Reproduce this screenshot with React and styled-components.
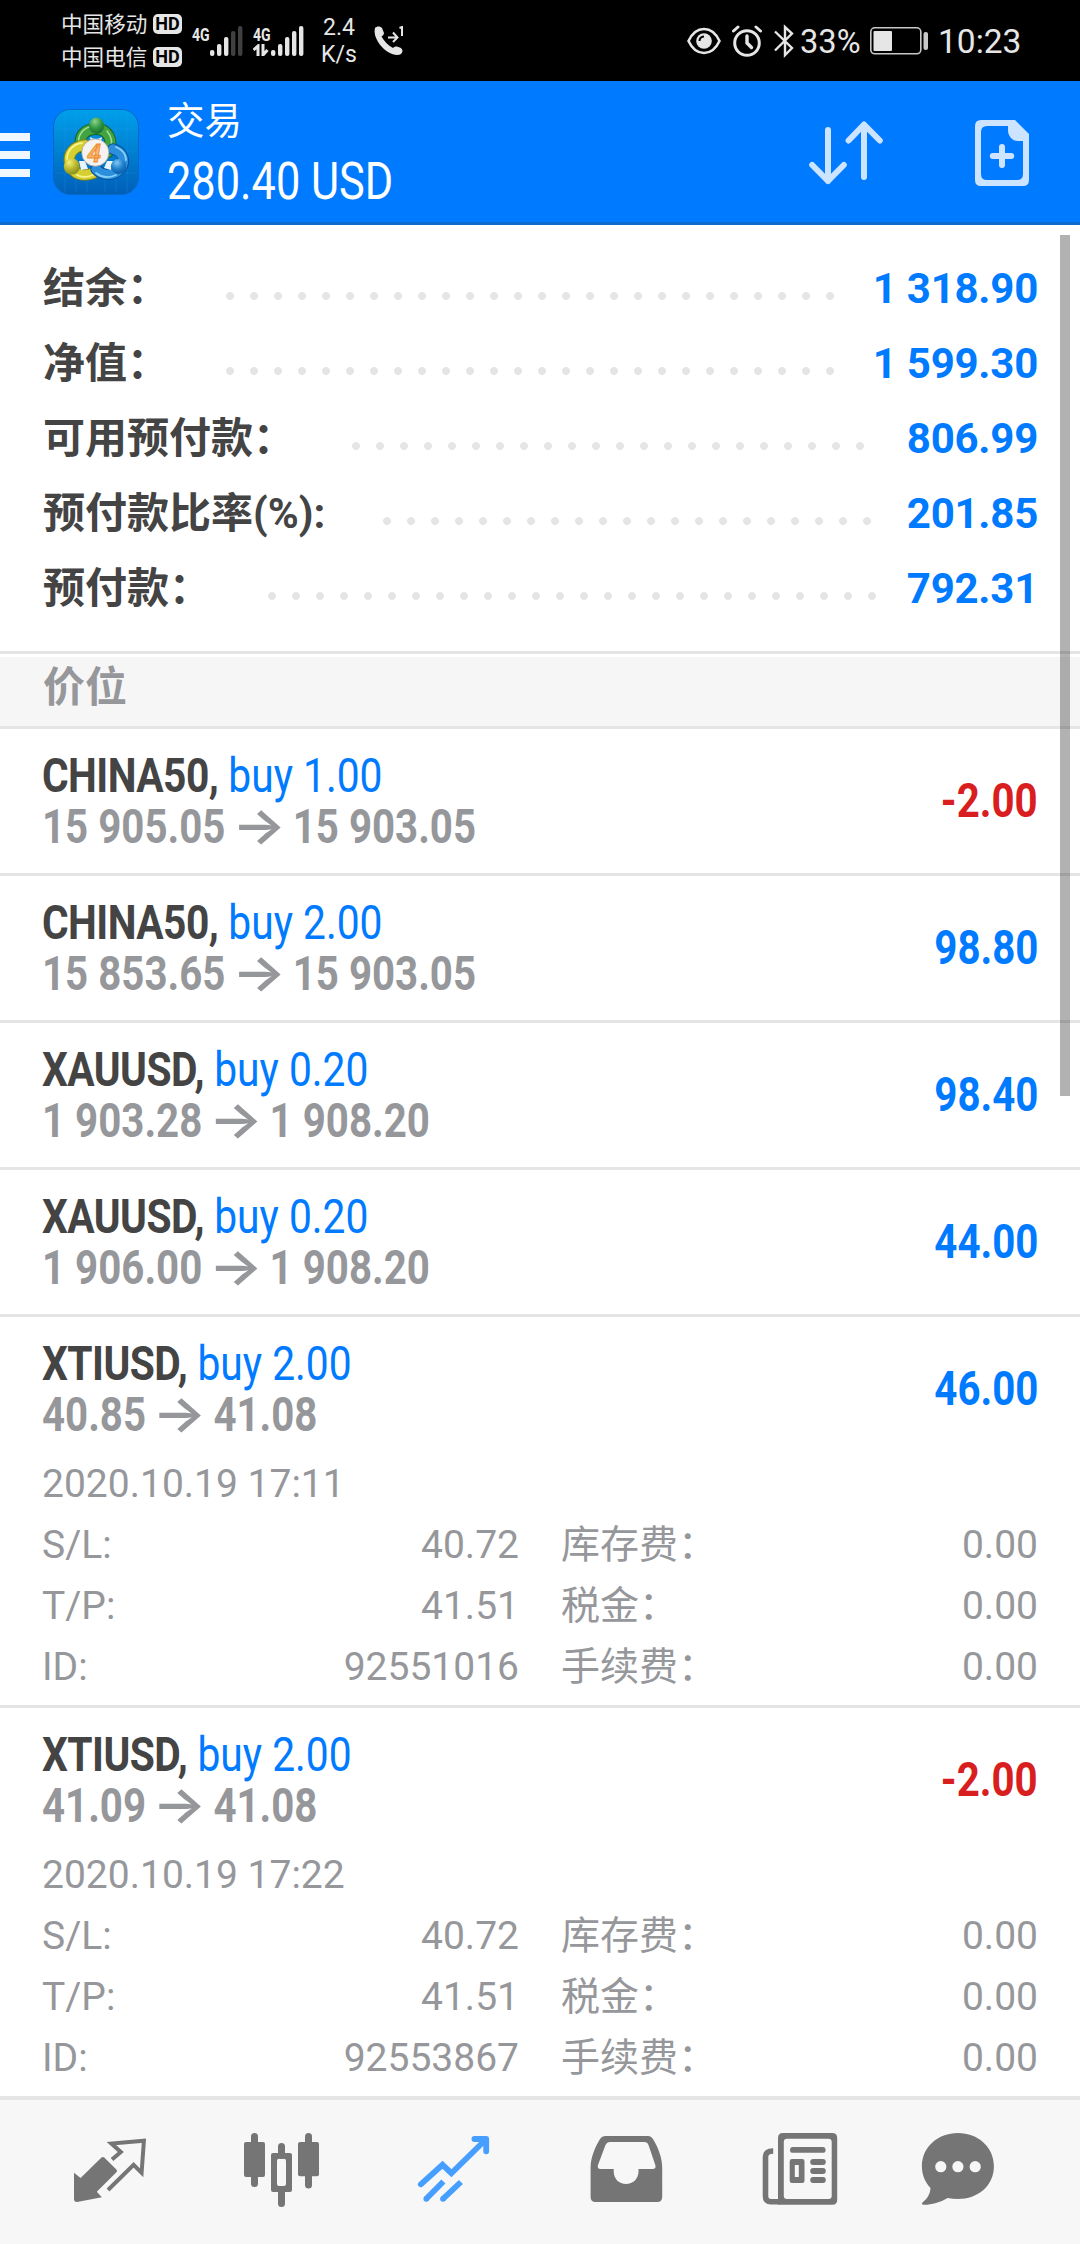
import React from 'react';
import styled, { createGlobalStyle } from 'styled-components';

const GlobalStyle = createGlobalStyle`
  * {
    box-sizing: border-box;
  }
  body {
    margin: 0;
    background: #fff;
    font-family: Roboto, 'Noto Sans CJK SC', sans-serif;
  }
  svg {
    display: block;
    flex: none;
  }
`;

const Screen = styled.div`
  position: relative;
  width: 1080px;
  height: 2244px;
  overflow: hidden;
  background: #fff;
`;

/* status bar */

const StatusBar = styled.div`
  display: flex;
  justify-content: space-between;
  align-items: center;
  height: 81px;
  padding: 0 59px 0 61px;
  background: #000;
  color: #e6e6e6;
`;

const StatusGroup = styled.div`
  display: flex;
  align-items: center;
`;

const Carriers = styled.div`
  display: flex;
  flex-direction: column;
  width: 121px;
`;

const Carrier = styled.div`
  display: flex;
  justify-content: space-between;
  align-items: center;
  height: 33px;
  font-size: 21.6px;
  line-height: 33px;
  white-space: nowrap;
`;

const HdBadge = styled.span`
  width: 29px;
  height: 20px;
  border-radius: 5px;
  background: #e6e6e6;
  color: #000;
  font-size: 18px;
  font-weight: 700;
  line-height: 20px;
  text-align: center;
`;

const Speed = styled.div`
  width: 36px;
  margin: 0 17px 0 17px;
  font-size: 23px;
  line-height: 27px;
  text-align: center;
`;

const StatusText = styled.span`
  width: ${props => props.$width}px;
  margin-left: ${props => props.$gap}px;
  font-size: 34px;
  line-height: 40px;
  white-space: nowrap;
`;

const Squeezed = styled.span`
  display: inline-block;
  transform: scaleX(${props => props.$by});
  transform-origin: left;
`;

const StatusIcon = styled.svg`
  margin-left: ${props => props.$gap}px;
`;

/* app header */

const Header = styled.header`
  display: flex;
  align-items: center;
  height: 144px;
  border-bottom: 3px solid #0f6bcb;
  background: #007aff;
  color: #fff;
`;

const MenuButton = styled.div`
  display: flex;
  flex-direction: column;
  gap: 10px;
  width: 30px;
  margin: 6px 23px 0 0;
`;

const MenuBar = styled.span`
  height: 8px;
  background: #f0f8ff;
`;

const Heading = styled.div`
  flex: 1;
  height: 141px;
  padding-top: 10px;
  margin-left: 28px;
`;

const Title = styled.div`
  font-size: 37.5px;
  line-height: 60px;
`;

const Amount = styled.div`
  font-size: 51px;
  line-height: 61px;
  white-space: nowrap;
  transform: scaleX(0.85);
  transform-origin: left;
`;

const HeaderActions = styled.div`
  display: flex;
  align-items: center;
  gap: 92px;
  margin: 2px 51px 0 0;
`;

/* account summary */

const Summary = styled.section`
  padding: 26px 42px 25px 43px;
`;

const SummaryRow = styled.div`
  display: flex;
  height: 75px;
  font-size: 42px;
  font-weight: 700;
  line-height: 75px;
  white-space: nowrap;
`;

const SummaryLabel = styled.span`
  width: ${props => props.$width}px;
  color: #444;
`;

const Leader = styled.span`
  width: ${props => props.$dots * 24}px;
  height: 24px;
  margin: 33px 0 0 49px;
  background: radial-gradient(circle, #e5e5e5 3.6px, transparent 4.3px) 0 0 / 24px 24px;
`;

const SummaryValue = styled.span`
  margin-left: auto;
  color: #007aff;
  letter-spacing: -0.25px;
`;

const SectionTitle = styled.div`
  height: 78px;
  padding: 0 43px;
  border-top: 3px solid #e5e5e5;
  border-bottom: 3px solid #e5e5e5;
  background: linear-gradient(#fff 3px, #f6f6f6 3px);
  color: #96979b;
  font-size: 42px;
  font-weight: 700;
  line-height: 67px;
`;

/* positions */

const Position = styled.article`
  border-bottom: 3px solid #e5e5e5;
`;

const PositionHead = styled.div`
  display: flex;
  justify-content: space-between;
  align-items: center;
  height: 144px;
  padding: 0 42px;
  font-size: 48.5px;
  line-height: 51px;
  white-space: nowrap;
`;

const Deal = styled.div`
  color: #007aff;
  transform: scaleX(0.84);
  transform-origin: left;
`;

const Symbol = styled.strong`
  color: #444;
  font-weight: 700;
  letter-spacing: -0.65px;
`;

const Prices = styled.div`
  color: #96979b;
  font-weight: 700;
  transform: scaleX(0.83);
  transform-origin: left;
`;

const Arrow = styled.span`
  display: inline-block;
  margin: 0 1px;
  width: 55px;
  font-family: Inter, sans-serif;
  font-size: 50px;
  font-weight: 600;
  line-height: 40px;
  text-align: center;
  transform: scaleX(1.37);
`;

const Profit = styled.div`
  padding-bottom: 2px;
  color: ${props => (props.$loss ? '#d81e1e' : '#007aff')};
  font-weight: 700;
  transform: scaleX(0.83);
  transform-origin: right;
`;

const Details = styled.div`
  padding: 1px 42px 7px 42px;
  color: #96979b;
  font-size: 39px;
  line-height: 61px;
`;

const OpenTime = styled.div`
  margin-bottom: 8px;
  line-height: 45px;
`;

const DetailGrid = styled.div`
  display: grid;
  grid-template-columns: 477px 477px;
  column-gap: 42px;
`;

const Detail = styled.div`
  display: flex;
  justify-content: space-between;
`;

const ScrollThumb = styled.div`
  position: absolute;
  top: 235px;
  right: 10px;
  width: 10px;
  height: 861px;
  background: rgba(0, 0, 0, 0.3);
`;

/* bottom navigation */

const TabBar = styled.nav`
  display: flex;
  height: 145px;
  padding-left: 24px;
  border-top: 1px solid #e5e5e5;
  background: #f7f7f7;
`;

const Tab = styled.div`
  width: 172px;
  height: 144px;
  color: ${props => (props.$active ? '#469eff' : '#757575')};
`;

const SignalBars = ({ dim = 0 }) => (
  <StatusIcon $gap={0} width="33" height="32" viewBox="0 0 33 32" fill="#e6e6e6">
    {[6, 12, 19, 25, 30].map((h, i) => (
      <rect key={h} x={i * 7} y={31 - h} width="4.4" height={h} rx="2" fill={i >= 5 - dim ? '#404040' : '#e6e6e6'} />
    ))}
  </StatusIcon>
);

const Network = styled.div`
  display: flex;
  flex-direction: column;
  width: 18px;
  height: 32px;
  margin-left: ${props => props.$gap}px;
`;

const NetworkType = styled.span`
  width: 24px;
  font-size: 19px;
  font-weight: 700;
  line-height: 19px;
  transform: scaleX(0.74);
  transform-origin: left;
`;

const Logo = () => (
  <svg width="86" height="86" viewBox="0 0 86 86">
    <defs>
      <linearGradient id="tile" x1="0" y1="0" x2="0" y2="1">
        <stop offset="0" stopColor="#009fea" />
        <stop offset="1" stopColor="#005fb8" />
      </linearGradient>
      <radialGradient id="green" cx="0.4" cy="0.25" r="0.8">
        <stop offset="0" stopColor="#8ed48c" />
        <stop offset="0.5" stopColor="#359a45" />
        <stop offset="1" stopColor="#14682a" />
      </radialGradient>
      <radialGradient id="yellow" cx="0.35" cy="0.25" r="0.85">
        <stop offset="0" stopColor="#f2ee7a" />
        <stop offset="0.5" stopColor="#b9b82c" />
        <stop offset="1" stopColor="#7c8419" />
      </radialGradient>
      <radialGradient id="blue" cx="0.4" cy="0.25" r="0.85">
        <stop offset="0" stopColor="#7fc8f4" />
        <stop offset="0.5" stopColor="#1f7fcb" />
        <stop offset="1" stopColor="#0853a4" />
      </radialGradient>
    </defs>
    <rect x="0.5" y="0.5" width="85" height="85" rx="17" fill="url(#tile)" stroke="#0869c4" />
    <path d="M12 3V83M23 3V83M34 3V83M52 3V83M63 3V83M74 3V83M3 20H83M3 42H83M3 64H83" stroke="#38a7ee" strokeOpacity="0.25" strokeWidth="0.8" />
    <g fill="none" strokeLinecap="round">
      <path d="M29 38C25 28 31 20 43 20C55 20 61 31 55 43" stroke="#17652a" strokeWidth="12" />
      <path d="M29 38C25 28 31 20 43 20C55 20 61 31 55 43" stroke="#41a342" strokeWidth="10" />
      <path d="M26 35C24 26 31 19 37 18M54 22C60 29 59 37 57 42" stroke="#a2de92" strokeWidth="1.6" />
      <path d="M32 36C21 37 14 45 17 55C20 66 30 68 41 64" stroke="#7f8119" strokeWidth="11.5" />
      <path d="M32 36C21 37 14 45 17 55C20 66 30 68 41 64" stroke="#d6cf31" strokeWidth="9.5" />
      <path d="M14 50C14 42 20 35 29 34M24 66C29 69 35 68 40 66" stroke="#f8f48c" strokeWidth="1.8" />
      <path d="M60 40C70 43 73 52 68 59C61 68 49 67 43 60" stroke="#064f9e" strokeWidth="11.5" />
      <path d="M60 40C70 43 73 52 68 59C61 68 49 67 43 60" stroke="#2c8fdb" strokeWidth="9.5" />
      <path d="M43 64C49 69 57 69 63 66M63 38C70 41 73 46 73 51" stroke="#86d2fa" strokeWidth="1.8" />
    </g>
    <path d="M26 52L32 52L35 60L28 61ZM60 52H54L51 59L58 61ZM37 28Q43 32 49 28L48 33H38Z" fill="#e9f4fb" />
    <ellipse cx="43.5" cy="16.7" rx="7.6" ry="8.2" fill="url(#green)" />
    <circle cx="18.8" cy="57.5" r="8" fill="url(#yellow)" />
    <circle cx="65.5" cy="57.5" r="7.6" fill="url(#blue)" />
    <circle cx="42.3" cy="43.6" r="13.6" fill="#f5f2f2" stroke="#a9a59c" strokeWidth="0.8" />
    <text x="41.3" y="52.7" textAnchor="middle" fontFamily="Roboto, sans-serif" fontSize="25" fontWeight="700" fontStyle="italic" fill="#f7b568" stroke="#ee8a2c" strokeWidth="0.8">
      4
    </text>
  </svg>
);

const SortIcon = () => (
  <svg width="74" height="66" viewBox="0 0 74 66" fill="none" stroke="#cce4ff" strokeWidth="6" strokeLinecap="round" strokeLinejoin="round">
    <path d="M19 10V61M3.2 45L19 61L34.8 45" />
    <path d="M55 57V5M39.6 20.5L55 4.5L70.8 20.5" />
  </svg>
);

const NewOrderIcon = () => (
  <svg width="54" height="66" viewBox="0 0 54 66">
    <path
      fill="#cce4ff"
      fillRule="evenodd"
      d="M6 0H40L54 14V60Q54 66 48 66H6Q0 66 0 60V6Q0 0 6 0ZM12 6Q6 6 6 12V54Q6 60 12 60H42Q48 60 48 54V21H43C37 21 33 16 33 10V6Z"
    />
    <path d="M27 27V45M17.8 36H36.2" stroke="#cce4ff" strokeWidth="6" strokeLinecap="round" />
  </svg>
);

const TabIcon = ({ children }) => (
  <svg width="172" height="144" viewBox="0 0 172 144" fill="currentColor">
    {children}
  </svg>
);

const QuotesIcon = () => (
  <TabIcon>
    <path d="M50 72.7L56.6 78L77.5 57.6Q79 56.4 80.5 57.8L92.4 69.4Q93.8 70.8 92.4 72.2L72.8 91.7L77.9 97.3L53.1 102Q50 102 50 99Z" />
    <path d="M88 59.5L96.8 52L87.4 43.6L119.9 40.8L117.6 72.8L109.6 64.8L84 90" fill="none" stroke="currentColor" strokeWidth="4" />
  </TabIcon>
);

const ChartIcon = () => (
  <TabIcon>
    <rect x="55" y="33" width="7" height="54" rx="3.5" />
    <rect x="48" y="42" width="21" height="35" rx="2" />
    <rect x="82" y="43" width="7" height="16" rx="3.5" />
    <rect x="82" y="88" width="7" height="19" rx="3.5" />
    <path fillRule="evenodd" d="M77 53H94Q96 53 96 55V90Q96 92 94 92H77Q75 92 75 90V55Q75 53 77 53ZM83 58.7Q81 58.7 81 61V84Q81 86 83 86H88Q90 86 90 84V61Q90 58.7 88 58.7Z" />
    <rect x="109" y="33" width="7" height="55.5" rx="3.5" />
    <rect x="102" y="42" width="21" height="34.3" rx="2" />
  </TabIcon>
);

const TradeIcon = () => (
  <TabIcon>
    <g fill="none" stroke="currentColor" strokeWidth="5.8">
      <path d="M52.8 84.3L74.5 64.8L83.4 73.2L117.5 39.8" strokeLinecap="round" />
      <path d="M106.4 39H118.2V51.3" strokeLinecap="round" strokeLinejoin="round" />
      <path d="M58.3 98.8L75.4 81.5M75 98.8L92.9 82" />
    </g>
    <circle cx="58.3" cy="98.8" r="2.9" />
    <circle cx="75" cy="98.8" r="2.9" />
  </TabIcon>
);

const HistoryIcon = () => (
  <TabIcon>
    <path
      fillRule="evenodd"
      d="M65.5 36H108.5Q111 36 113 39C118 47 122.2 58 122.2 67V97Q122.2 102 117.2 102H55.6Q50.6 102 50.6 97V67C50.6 58 55 47 60 39Q62 36 65.5 36ZM70 42Q67 42 65.5 45L58 65Q57 69 60.5 69H73.7V72C74 79 79 84 86.1 84C93 84 98.2 79 98.5 72V69H112.5Q116.5 69 115.3 65L108.5 45Q107.5 42 104.3 42Z"
    />
  </TabIcon>
);

const NewsIcon = () => (
  <TabIcon>
    <path
      fillRule="evenodd"
      d="M71 33H120.2Q125.2 33 125.2 38V99.7Q125.2 104.7 120.2 104.7H66V38Q66 33 71 33ZM75 38.7Q71.8 38.7 71.8 42V96Q71.8 99 75 99H116.5Q119.7 99 119.7 96V42Q119.7 38.7 116.5 38.7Z"
    />
    <path d="M61.2 51Q53.5 51 53.5 57V96Q53.5 101.8 59 101.8H67" fill="none" stroke="currentColor" strokeWidth="5.6" />
    <rect x="78" y="47" width="35.6" height="5.8" rx="2.9" />
    <path fillRule="evenodd" d="M80 59H90.2Q92.5 59 92.5 61.3V80.7Q92.5 83 90.2 83H80Q77.7 83 77.7 80.7V61.3Q77.7 59 80 59ZM82.8 65V77H86.8V65Z" />
    <rect x="98.2" y="59" width="15.6" height="6" rx="3" />
    <rect x="98.2" y="68" width="15.6" height="6" rx="3" />
    <rect x="98.2" y="77" width="15.6" height="6" rx="3" />
  </TabIcon>
);

const ChatIcon = () => (
  <TabIcon>
    <path d="M73.9 33C94 33 109.9 47 109.9 66C109.9 86 94 99 73.9 99Q68.5 99 63.7 98C56 102.5 47 105 39.5 104.8Q37 104.5 38.5 102.5C44 98 46 94 46.5 88C41 82 37.9 75 37.9 66C37.9 47 54 33 73.9 33Z" />
    <g fill="#f7f7f7">
      <circle cx="56.8" cy="66.7" r="5.6" />
      <circle cx="73.9" cy="66.7" r="5.6" />
      <circle cx="91.2" cy="66.7" r="5.6" />
    </g>
  </TabIcon>
);

const summary = [
  { label: '结余:', width: 126, dots: 26, value: '1 318.90' },
  { label: '净值:', width: 126, dots: 26, value: '1 599.30' },
  { label: '可用预付款:', width: 252, dots: 22, value: '806.99' },
  { label: '预付款比率(%):', width: 283, dots: 21, value: '201.85' },
  { label: '预付款:', width: 168, dots: 26, value: '792.31' },
];

const positions = [
  { symbol: 'CHINA50', volume: '1.00', open: '15 905.05', price: '15 903.05', profit: '-2.00' },
  { symbol: 'CHINA50', volume: '2.00', open: '15 853.65', price: '15 903.05', profit: '98.80' },
  { symbol: 'XAUUSD', volume: '0.20', open: '1 903.28', price: '1 908.20', profit: '98.40' },
  { symbol: 'XAUUSD', volume: '0.20', open: '1 906.00', price: '1 908.20', profit: '44.00' },
  { symbol: 'XTIUSD', volume: '2.00', open: '40.85', price: '41.08', profit: '46.00', time: '2020.10.19 17:11', id: '92551016' },
  { symbol: 'XTIUSD', volume: '2.00', open: '41.09', price: '41.08', profit: '-2.00', time: '2020.10.19 17:22', id: '92553867' },
];

const detailRows = id => [
  ['S/L:', '40.72'],
  ['库存费\uff1a', '0.00'],
  ['T/P:', '41.51'],
  ['税金\uff1a', '0.00'],
  ['ID:', id],
  ['手续费\uff1a', '0.00'],
];

// labels that end in a Chinese character take the full-width colon
const withColon = label => (label.endsWith('):') ? label : label.replace(':', '\uff1a'));

const PositionItem = ({ symbol, volume, open, price, profit, time, id }) => (
  <Position>
    <PositionHead>
      <div>
        <Deal>
          <Symbol>{symbol},</Symbol> buy {volume}
        </Deal>
        <Prices>
          {open} <Arrow>→</Arrow> {price}
        </Prices>
      </div>
      <Profit $loss={profit.startsWith('-')}>{profit}</Profit>
    </PositionHead>
    {time && (
      <Details>
        <OpenTime>{time}</OpenTime>
        <DetailGrid>
          {detailRows(id).map(([label, value]) => (
            <Detail key={label}>
              <span>{label}</span>
              <span>{value}</span>
            </Detail>
          ))}
        </DetailGrid>
      </Details>
    )}
  </Position>
);

const PhoneStatus = () => (
  <StatusBar>
    <StatusGroup>
      <Carriers>
        <Carrier>
          中国移动 <HdBadge>HD</HdBadge>
        </Carrier>
        <Carrier>
          中国电信 <HdBadge>HD</HdBadge>
        </Carrier>
      </Carriers>
      <Network $gap={10}>
        <NetworkType>4G</NetworkType>
      </Network>
      <SignalBars dim={2} />
      <Network $gap={10}>
        <NetworkType>4G</NetworkType>
        <svg width="16" height="12" viewBox="0 0 16 12" fill="none" stroke="#e6e6e6" strokeWidth="3">
          <path d="M5 12V2L0.5 6M10 0V11L14.5 6" />
        </svg>
      </Network>
      <SignalBars />
      <Speed>
        2.4
        <br />
        K/s
      </Speed>
      <StatusIcon $gap={0} width="30" height="30" viewBox="0 0 30 30">
        <path d="M1 2C3 0 6 0 8 2L10 7Q10 9 7.5 10.5C10 15 14 19.5 19 22Q20 20 23 20.5L27 22Q30 25 27 28C24 30 19 29 14 26C8 22 3 16 1 9Q0 5 1 2Z" fill="#e6e6e6" />
        <path d="M14 11.5H23M19 6.5L23.5 11.500L19 16M25.5 2L28 1V10" fill="none" stroke="#e6e6e6" strokeWidth="2" />
      </StatusIcon>
    </StatusGroup>
    <StatusGroup>
      <StatusIcon $gap={0} width="34" height="28" viewBox="0 0 34 28">
        <path d="M1.5 14C9 -2 25 -2 32.5 14C25 30 9 30 1.5 14Z" fill="none" stroke="#e6e6e6" strokeWidth="2.6" />
        <circle cx="17" cy="14" r="7.8" fill="#e6e6e6" />
        <path d="M12.5 14Q12.5 10 17 9.5" fill="none" stroke="#000" strokeWidth="2" />
      </StatusIcon>
      <StatusIcon $gap={11} width="30" height="32" viewBox="0 0 30 32" fill="none" stroke="#e6e6e6" strokeWidth="3" strokeLinecap="round">
        <circle cx="15" cy="18" r="12.3" />
        <path d="M15 11V18L19.5 22.5" strokeWidth="3.4" />
        <path d="M1.5 6L6 2M28.5 6L24 2" />
      </StatusIcon>
      <StatusIcon $gap={12} width="20" height="34" viewBox="0 0 20 34" fill="none" stroke="#e6e6e6" strokeWidth="2.4">
        <path d="M1 7.5L18 24L11 31V3L18 9.5L1 26.5" />
      </StatusIcon>
      <StatusText $width={62} $gap={6}>
        <Squeezed $by={0.96}>33%</Squeezed>
      </StatusText>
      <StatusIcon $gap={8} width="59" height="28" viewBox="0 0 59 28">
        <rect x="0.8" y="0.8" width="50" height="26" rx="4" fill="none" stroke="#c8c8c8" strokeWidth="1.6" />
        <rect x="3.5" y="4" width="18.5" height="20" rx="1" fill="#e6e6e6" />
        <rect x="53.5" y="5" width="4.5" height="18" rx="2" fill="#c8c8c8" />
      </StatusIcon>
      <StatusText $width={83} $gap={9}>
        <Squeezed $by={0.985}>10:23</Squeezed>
      </StatusText>
    </StatusGroup>
  </StatusBar>
);

const App = () => (
  <Screen>
    <GlobalStyle />
    <PhoneStatus />
    <Header>
      <MenuButton>
        <MenuBar />
        <MenuBar />
        <MenuBar />
      </MenuButton>
      <Logo />
      <Heading>
        <Title>交易</Title>
        <Amount>280.40 USD</Amount>
      </Heading>
      <HeaderActions>
        <SortIcon />
        <NewOrderIcon />
      </HeaderActions>
    </Header>
    <Summary>
      {summary.map(({ label, width, dots, value }) => (
        <SummaryRow key={label}>
          <SummaryLabel $width={width}>{withColon(label)}</SummaryLabel>
          <Leader $dots={dots} />
          <SummaryValue>{value}</SummaryValue>
        </SummaryRow>
      ))}
    </Summary>
    <SectionTitle>价位</SectionTitle>
    {positions.map((position, i) => (
      <PositionItem key={i} {...position} />
    ))}
    <TabBar>
      <Tab>
        <QuotesIcon />
      </Tab>
      <Tab>
        <ChartIcon />
      </Tab>
      <Tab $active>
        <TradeIcon />
      </Tab>
      <Tab>
        <HistoryIcon />
      </Tab>
      <Tab>
        <NewsIcon />
      </Tab>
      <Tab>
        <ChatIcon />
      </Tab>
    </TabBar>
    <ScrollThumb />
  </Screen>
);

export default App;
